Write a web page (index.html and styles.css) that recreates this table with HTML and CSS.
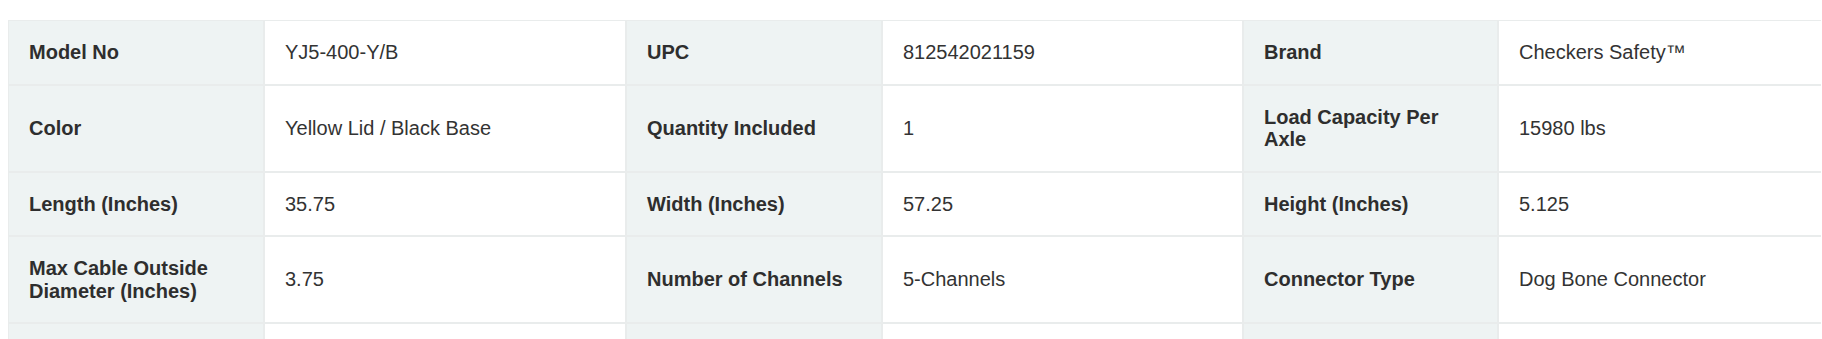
FILE: index.html
```html
<!DOCTYPE html>
<html lang="en">
<head>
<meta charset="utf-8">
<title>Specifications</title>
<link rel="stylesheet" href="styles.css">
</head>
<body>
<div class="spec-wrap">
  <table class="spec-table">
    <colgroup>
      <col class="col-label">
      <col class="col-value">
      <col class="col-label">
      <col class="col-value-b">
      <col class="col-label-c">
      <col class="col-value">
    </colgroup>
    <tbody>
      <tr>
        <th>Model No</th><td>YJ5-400-Y/B</td>
        <th>UPC</th><td>812542021159</td>
        <th>Brand</th><td>Checkers Safety™</td>
      </tr>
      <tr>
        <th>Color</th><td>Yellow Lid / Black Base</td>
        <th>Quantity Included</th><td>1</td>
        <th>Load Capacity Per Axle</th><td>15980 lbs</td>
      </tr>
      <tr>
        <th>Length (Inches)</th><td>35.75</td>
        <th>Width (Inches)</th><td>57.25</td>
        <th>Height (Inches)</th><td>5.125</td>
      </tr>
      <tr>
        <th>Max Cable Outside Diameter (Inches)</th><td>3.75</td>
        <th>Number of Channels</th><td>5-Channels</td>
        <th>Connector Type</th><td>Dog Bone Connector</td>
      </tr>
      <tr>
        <th>&nbsp;</th><td>&nbsp;</td>
        <th>&nbsp;</th><td>&nbsp;</td>
        <th>&nbsp;</th><td>&nbsp;</td>
      </tr>
    </tbody>
  </table>
</div>
</body>
</html>
```

FILE: styles.css
```css
html, body {
  margin: 0;
  padding: 0;
  background: #ffffff;
  overflow: hidden;
}

body {
  font-family: "Liberation Sans", Arial, Helvetica, sans-serif;
  color: #333333;
}

.spec-wrap {
  width: 1821px;
  padding: 20px 0 0 8px;
  box-sizing: border-box;
  overflow: hidden;
}

.spec-table {
  table-layout: fixed;
  width: 1852px;
  border-collapse: separate;
  border-spacing: 0;
  font-size: 20px;
  line-height: 22.5px;
}

.col-label { width: 256px; }
.col-label-c { width: 255px; }
.col-value { width: 362px; }
.col-value-b { width: 361px; }

.spec-table th,
.spec-table td {
  border: 1px solid #e9ecec;
  padding: 20px 20px 20px 20px;
  text-align: left;
  vertical-align: middle;
  box-sizing: border-box;
}

.spec-table th {
  background: #eef3f3;
  font-weight: 700;
  color: #2e2e2e;
}

.spec-table td {
  background: #ffffff;
  font-weight: 400;
  color: #333333;
}
```
